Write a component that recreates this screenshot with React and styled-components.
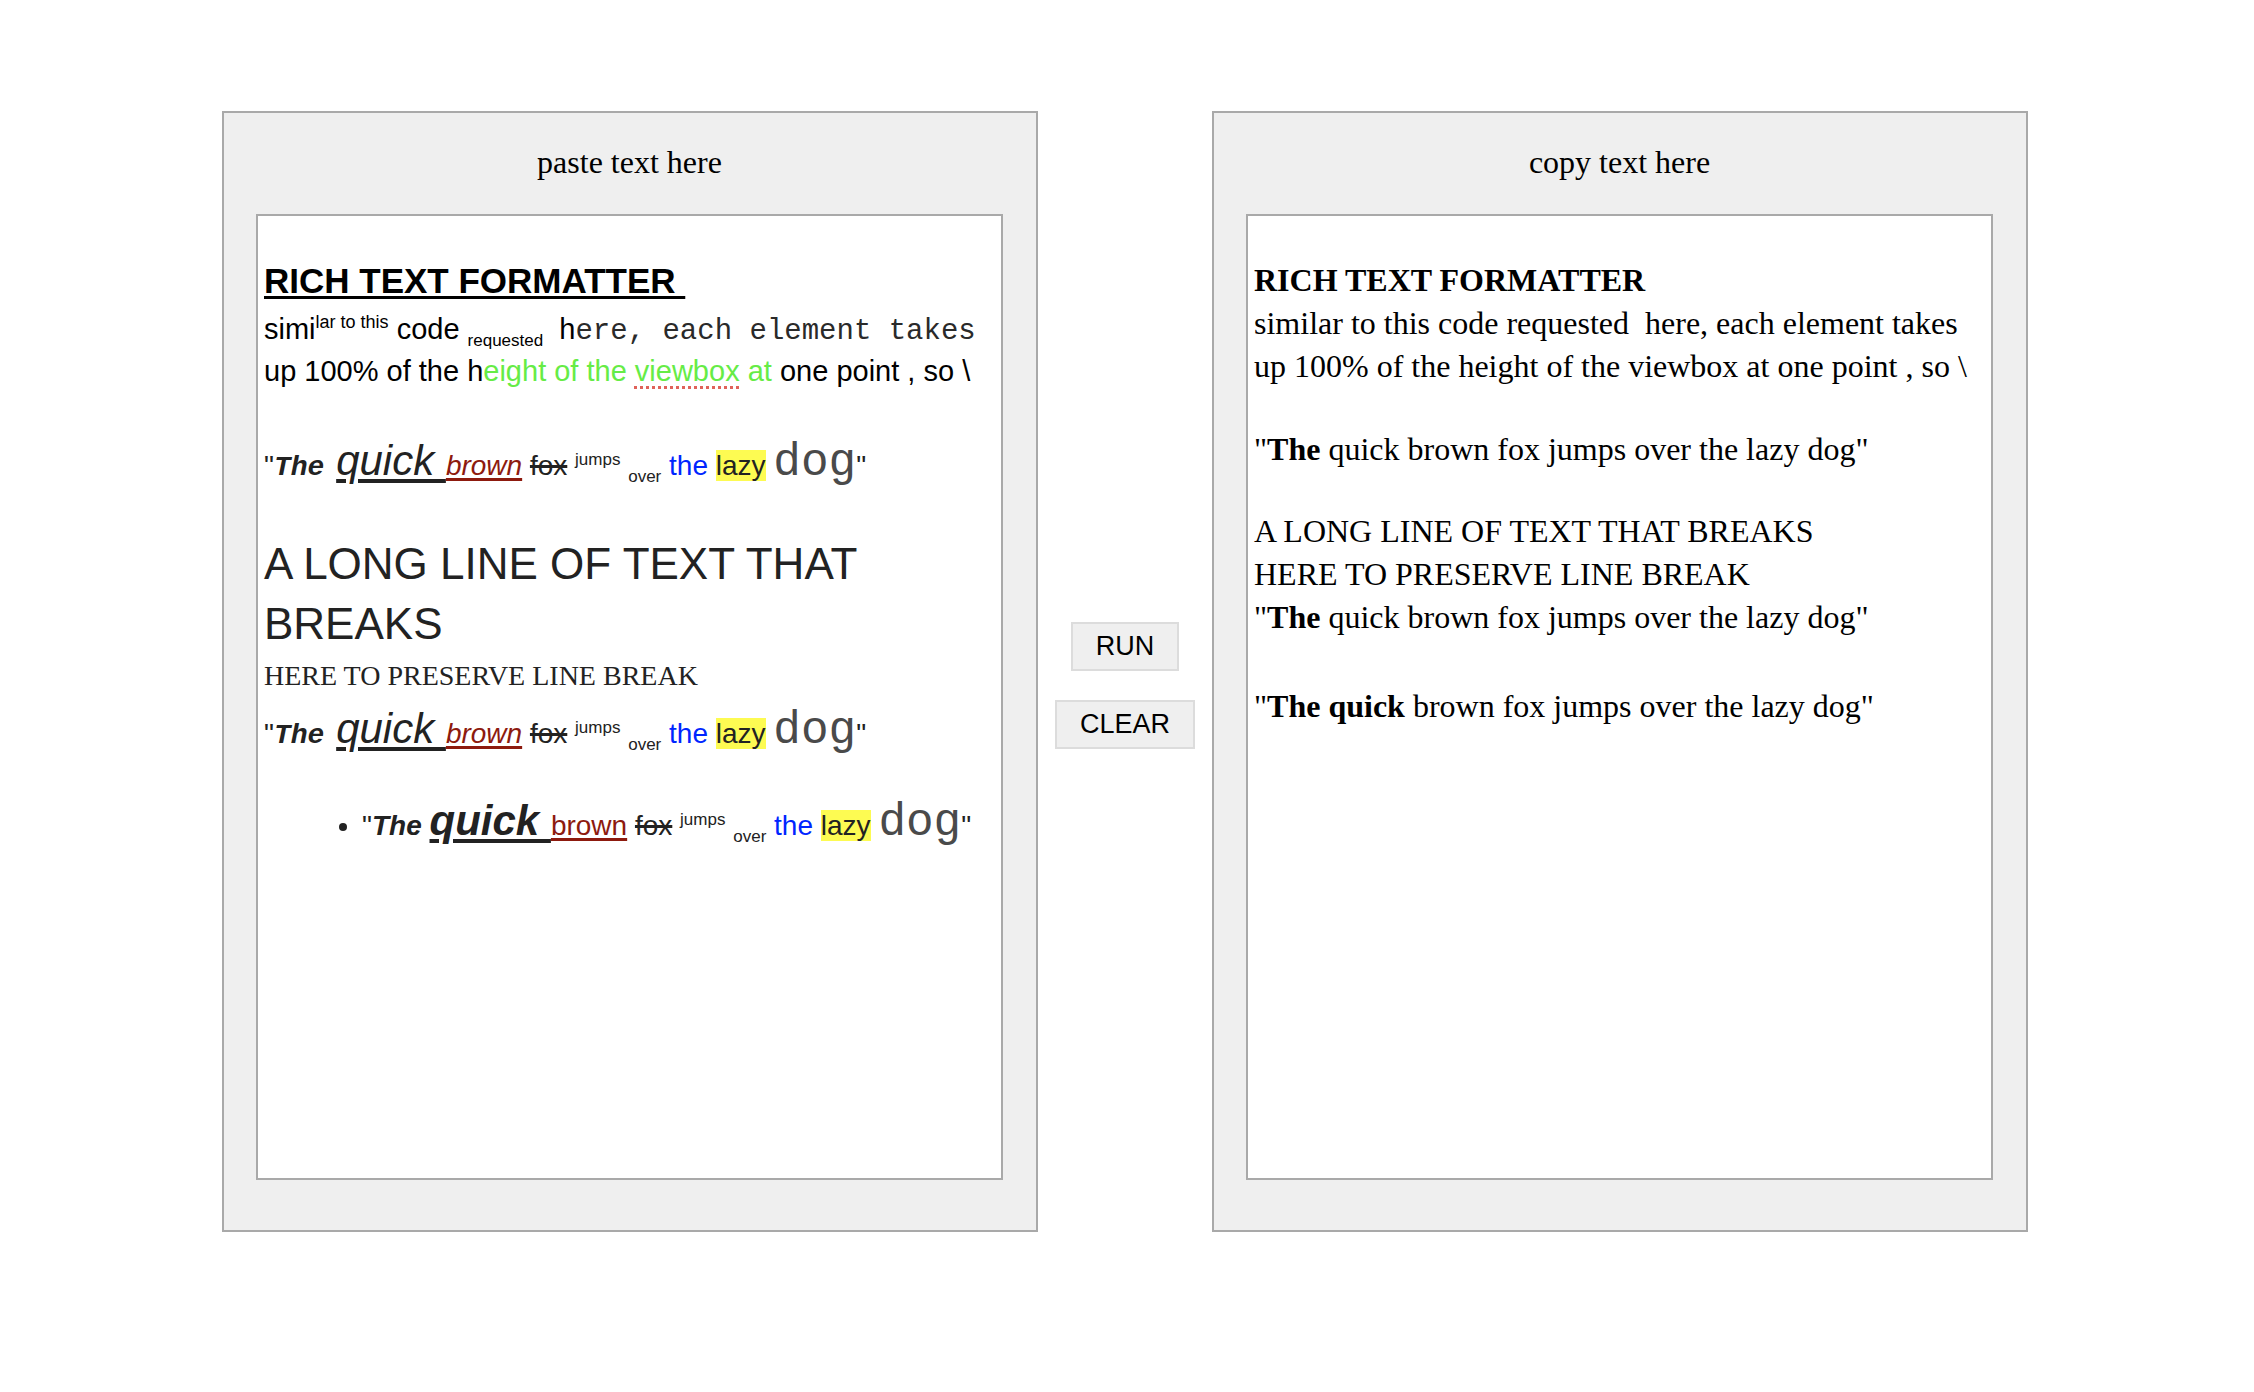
import styled, { createGlobalStyle } from 'styled-components';

const GlobalStyle = createGlobalStyle`
  html, body {
    margin: 0;
    padding: 0;
    background: #fff;
  }
  body {
    font-family: "Liberation Serif", "Times New Roman", serif;
  }
`;

const Page = styled.div`
  display: flex;
  justify-content: center;
  align-items: flex-start;
  padding: 111px 4px 0 0;
`;

const Panel = styled.section`
  box-sizing: border-box;
  width: 816px;
  border: 2px solid #a9a9a9;
  background: #efefef;
  padding: 28px 33px 50px 32px;
`;

const PanelTitle = styled.div`
  font-family: "Liberation Serif", "Times New Roman", serif;
  font-size: 32px;
  line-height: 43px;
  text-align: center;
  color: #000;
  margin-bottom: 30px;
`;

const TextBox = styled.div`
  box-sizing: border-box;
  height: 966px;
  border: 2px solid #a9a9a9;
  background: #fff;
  padding: 0 6px;
  overflow: hidden;
`;

const Controls = styled.div`
  width: 174px;
  display: flex;
  flex-direction: column;
  align-items: center;
  gap: 29px;
  padding-top: 511px;
`;

const Button = styled.button`
  font-family: "Liberation Sans", Arial, sans-serif;
  font-size: 27px;
  line-height: 31px;
  padding: 7px 23px;
  border: 2px solid #dcdcdc;
  border-radius: 0;
  background: #efefef;
  color: #000;
  cursor: pointer;
`;

/* ---------- left (rich) side ---------- */

const Heading = styled.div`
  margin-top: 42px;
  font-family: "Liberation Sans", Arial, sans-serif;
  font-weight: 700;
  font-size: 35px;
  line-height: 45px;
  color: #000;
`;

const Underlined = styled.span`
  text-decoration: underline;
  text-decoration-thickness: 3px;
  text-underline-offset: 3px;
`;

const RichPara = styled.div`
  margin-top: 5px;
  font-family: "Liberation Sans", Arial, sans-serif;
  font-size: 29px;
  line-height: 42px;
  color: #000;
`;

const Sup = styled.sup`
  font-size: ${p => p.$size || 18}px;
  line-height: 0;
  vertical-align: super;
`;

const Sub = styled.sub`
  font-size: ${p => p.$size || 17}px;
  line-height: 0;
  vertical-align: sub;
`;

const Typed = styled.span`
  font-family: "Liberation Mono", "Courier New", monospace;
  font-size: 29px;
  line-height: 0;
  color: #2a2a2a;
`;

const Green = styled.span`
  color: #66ec46;
`;

const Misspelled = styled.span`
  text-decoration: underline dotted #e0625a;
  text-decoration-thickness: 3px;
  text-underline-offset: 5px;
`;

const QuoteLine = styled.div`
  margin-top: ${p => p.$top || 0}px;
  font-family: "Liberation Sans", Arial, sans-serif;
  font-size: 28px;
  line-height: 60px;
  color: #222;
  white-space: nowrap;
`;

const TypeThe = styled.span`
  font-family: "Liberation Mono", "Courier New", monospace;
  font-weight: 700;
  font-style: italic;
  font-size: 28px;
  line-height: 0;
  margin-right: 4px;
`;

const SansThe = styled.span`
  font-weight: 700;
  font-style: italic;
`;

const Quick = styled.span`
  font-size: 42px;
  font-weight: ${p => (p.$bold ? 700 : 400)};
  font-style: italic;
  line-height: 0;
  color: #222;
  text-decoration: underline;
  text-decoration-thickness: 4px;
  text-underline-offset: 4px;
`;

const Brown = styled.span`
  color: #8d1a0e;
  font-style: ${p => (p.$italic ? 'italic' : 'normal')};
  text-decoration: underline;
  text-decoration-thickness: 3px;
  text-underline-offset: 3px;
`;

const Struck = styled.span`
  text-decoration: line-through;
  text-decoration-thickness: 3px;
`;

const Blue = styled.span`
  color: #0025ff;
`;

const Highlight = styled.span`
  background: #fdfb52;
`;

const Dog = styled.span`
  font-family: "Liberation Mono", "Courier New", monospace;
  font-size: 46px;
  line-height: 0;
  color: #4a4a4a;
`;

const LongLine = styled.div`
  margin-top: 38px;
  font-family: "Liberation Sans", Arial, sans-serif;
  font-size: 44px;
  line-height: 60px;
  color: #222;
`;

const SerifLine = styled.div`
  font-family: "Liberation Serif", "Times New Roman", serif;
  font-size: 28px;
  line-height: 44px;
  color: #222;
`;

const Bullets = styled.ul`
  margin: 32px 0 0;
  padding-left: 98px;
  font-family: "Liberation Sans", Arial, sans-serif;
  font-size: 28px;
  line-height: 60px;
  color: #222;
  white-space: nowrap;
`;

/* ---------- right (plain) side ---------- */

const PlainLine = styled.div`
  margin-top: ${p => p.$top || 0}px;
  font-family: "Liberation Serif", "Times New Roman", serif;
  font-size: 32px;
  line-height: 43px;
  color: #000;
`;

const FoxSentence = ({ bulleted = false }) => (
  <>
    "{bulleted ? <SansThe>The</SansThe> : <TypeThe>The</TypeThe>}{' '}
    <Quick $bold={bulleted}>quick </Quick>
    <Brown $italic={!bulleted}>brown</Brown>{' '}
    <Struck>fox</Struck>{' '}
    <Sup $size={17}>jumps</Sup>{' '}
    <Sub>over</Sub>{' '}
    <Blue>the</Blue>{' '}
    <Highlight>lazy</Highlight>{' '}
    <Dog>dog</Dog>"
  </>
);

const RichSide = () => (
  <TextBox>
    <Heading>
      <Underlined>RICH TEXT FORMATTER&nbsp;</Underlined>
    </Heading>
    <RichPara>
      simi<Sup>lar to this</Sup> code <Sub>requested</Sub>&nbsp; h
      <Typed>ere, each element takes</Typed> up 100% of the h
      <Green>
        eight of the <Misspelled>viewbox</Misspelled> at
      </Green>{' '}
      one point , so \
    </RichPara>
    <QuoteLine $top={44}>
      <FoxSentence />
    </QuoteLine>
    <LongLine>A LONG LINE OF TEXT THAT BREAKS</LongLine>
    <SerifLine>HERE TO PRESERVE LINE BREAK</SerifLine>
    <QuoteLine $top={6}>
      <FoxSentence />
    </QuoteLine>
    <Bullets>
      <li>
        <FoxSentence bulleted />
      </li>
    </Bullets>
  </TextBox>
);

const PlainSide = () => (
  <TextBox>
    <PlainLine $top={43}>
      <b>RICH TEXT FORMATTER</b>
    </PlainLine>
    <PlainLine>
      similar to this code requested&nbsp; here, each element takes up 100% of the height of the
      viewbox at one point , so \
    </PlainLine>
    <PlainLine $top={40}>
      "<b>The</b> quick brown fox jumps over the lazy dog"
    </PlainLine>
    <PlainLine $top={39}>A LONG LINE OF TEXT THAT BREAKS</PlainLine>
    <PlainLine>HERE TO PRESERVE LINE BREAK</PlainLine>
    <PlainLine>
      "<b>The</b> quick brown fox jumps over the lazy dog"
    </PlainLine>
    <PlainLine $top={46}>
      "<b>The quick</b> brown fox jumps over the lazy dog"
    </PlainLine>
  </TextBox>
);

export default function App() {
  return (
    <>
      <GlobalStyle />
      <Page>
        <Panel>
          <PanelTitle>paste text here</PanelTitle>
          <RichSide />
        </Panel>
        <Controls>
          <Button>RUN</Button>
          <Button>CLEAR</Button>
        </Controls>
        <Panel>
          <PanelTitle>copy text here</PanelTitle>
          <PlainSide />
        </Panel>
      </Page>
    </>
  );
}
